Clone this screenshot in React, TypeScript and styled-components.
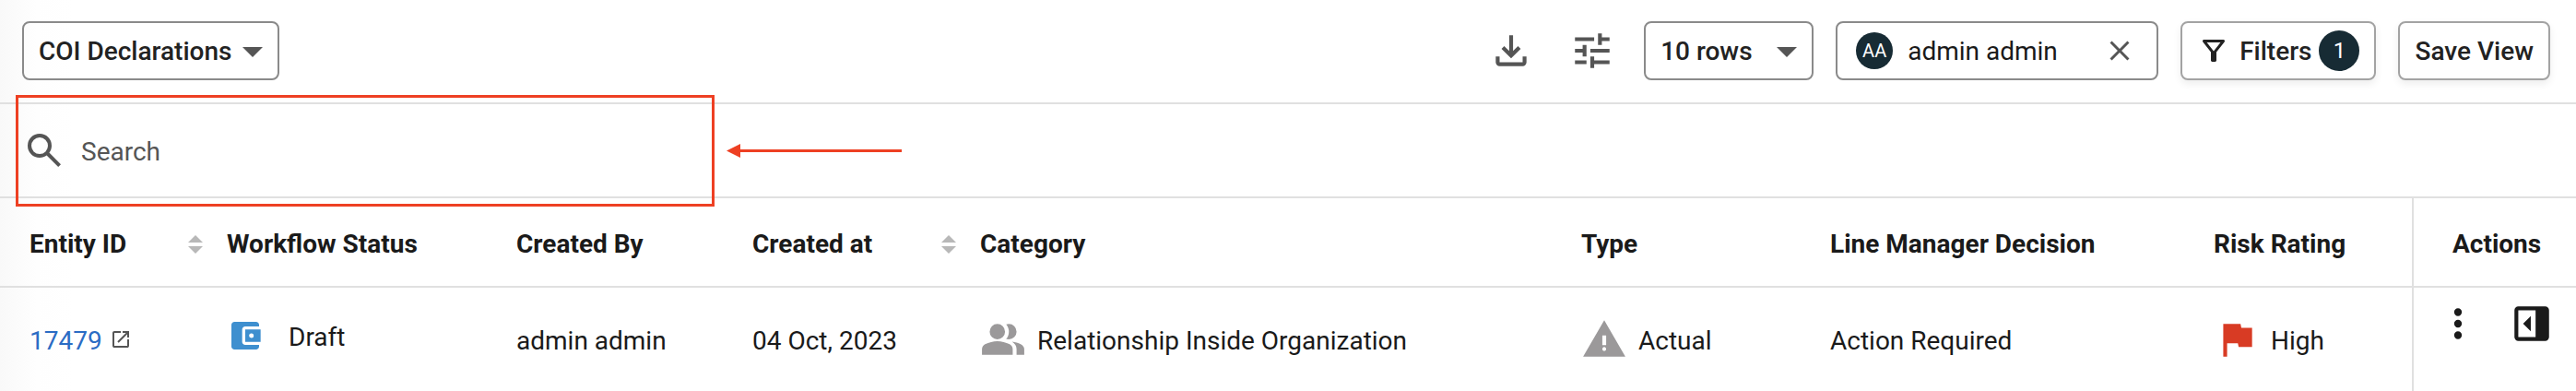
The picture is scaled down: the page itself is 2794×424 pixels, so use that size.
import React from 'react';
import styled, { createGlobalStyle } from 'styled-components';

const GlobalStyle = createGlobalStyle`
  * { box-sizing: border-box; }
  body {
    margin: 0;
    background: #fff;
    color: #1a1a1a;
    font-family: Roboto, "Liberation Sans", sans-serif;
    font-size: 28px;
    line-height: 32px;
  }
  button, input, select { font: inherit; color: inherit; }
`;

const Page = styled.main`
  background: linear-gradient(to right, #f9f9f9, #fefefe 40px, #fff 80px);
`;

const Toolbar = styled.header`
  display: flex;
  align-items: center;
  justify-content: space-between;
  height: 113px;
  padding: 0 28px 2px 24px;
  border-bottom: 2px solid #e0e0e0;
`;

const Tools = styled.div`
  display: flex;
  align-items: center;
  gap: 24px;
`;

const IconGroup = styled.div`
  display: flex;
  gap: 38px;
  margin-right: 7px;
`;

const IconButton = styled.button`
  display: flex;
  padding: 0;
  border: 0;
  background: none;
  color: #555;
  cursor: pointer;
`;

const Label = styled.span`
  display: block;
  padding-top: 3px;
`;

const SelectBox = styled.div<{ $width: number }>`
  display: grid;
  grid-template-columns: 1fr auto;
  align-items: center;
  width: ${(p) => p.$width}px;
  height: 64px;
  padding-right: 16px;
  border: 2px solid #8a8a8a;
  border-radius: 8px;
  color: #555;
`;

const Select = styled.select`
  grid-area: 1 / 1 / 2 / 3;
  width: 100%;
  height: 60px;
  padding: 3px 0 0 16px;
  border: 0;
  background: transparent;
  color: #222;
  font-weight: 500;
  appearance: none;
  outline: none;
`;

const Caret = styled.svg`
  grid-area: 1 / 2;
  width: 22px;
  height: 11px;
  margin-top: 3px;
  pointer-events: none;
`;

const UserChip = styled.div`
  display: flex;
  align-items: center;
  width: 350px;
  height: 64px;
  padding: 0 22px 0 20px;
  border: 2px solid #8a8a8a;
  border-radius: 8px;
`;

const Round = styled.span<{ $size: number; $font: number }>`
  display: flex;
  align-items: center;
  justify-content: center;
  width: ${(p) => p.$size}px;
  height: ${(p) => p.$size}px;
  border-radius: 50%;
  background: #172b34;
  color: #fff;
  font-size: ${(p) => p.$font}px;
  font-weight: 400;
`;

const UserName = styled(Label)`
  flex: 1;
  margin-left: 16px;
`;

const Button = styled.button`
  display: flex;
  align-items: center;
  height: 64px;
  padding: 0 16px;
  border: 2px solid #a3a3a3;
  border-radius: 8px;
  background: #fff;
  color: #222;
  font-weight: 500;
  white-space: nowrap;
  box-shadow: 0 4px 8px rgba(0, 0, 0, 0.07);
  cursor: pointer;
`;

const FilterLabel = styled(Label)`
  margin: 0 8px 0 10px;
`;

const SearchBar = styled.div`
  display: flex;
  align-items: center;
  height: 102px;
  padding: 0 24px;
  border-bottom: 2px solid #e0e0e0;
`;

const SearchField = styled.label`
  position: relative;
  display: flex;
  flex: 0 1 744px;
  align-items: center;
  gap: 16px;
  color: #555;
`;

const SearchInput = styled.input`
  flex: 1;
  min-width: 0;
  height: 60px;
  padding: 3px 0 0;
  border: 0;
  outline: none;
  background: none;
  &::placeholder { color: #555; opacity: 1; }
`;

const Highlight = styled.span`
  position: absolute;
  inset: -30px -7px -31px -7px;
  border: 3px solid #ee4023;
  pointer-events: none;
`;

const Arrow = styled.svg`
  width: 190px;
  height: 15px;
  margin-left: 20px;
`;

const Table = styled.table`
  width: 100%;
  table-layout: fixed;
  border-collapse: separate;
  border-spacing: 0;
`;

const Col = styled.col<{ $width?: number }>`
  width: ${(p) => (p.$width ? `${p.$width}px` : 'auto')};
`;

const HeadCell = styled.th`
  height: 97px;
  padding: 4px 10px 0 0;
  border-bottom: 2px solid #e0e0e0;
  text-align: left;
  font-weight: 700;
  white-space: nowrap;
  &:first-child { padding-left: 32px; }
  &:last-child { padding-left: 42px; border-left: 2px solid #e0e0e0; }
`;

const HeadInner = styled.div`
  display: flex;
  align-items: center;
  justify-content: space-between;
  padding-right: 16px;
`;

const SortButton = styled(IconButton)`
  color: #b8b8b8;
`;

const Cell = styled.td`
  height: 112px;
  padding: 0;
  vertical-align: middle;
  white-space: nowrap;
  &:first-child { padding-left: 32px; }
  &:last-child {
    padding: 14px 0 0 23px;
    border-left: 2px solid #e0e0e0;
    vertical-align: top;
  }
`;

const CellInner = styled.div<{ $gap: number; $raise?: boolean }>`
  display: flex;
  align-items: center;
  gap: ${(p) => p.$gap}px;
  padding-bottom: ${(p) => (p.$raise ? 8 : 0)}px;
`;

const EntityLink = styled.a`
  padding-top: 3px;
  color: #2b6cc4;
  text-decoration: none;
`;

const Actions = styled.div`
  display: flex;
  gap: 30px;
  button { color: #1a1a1a; }
`;

type IconProps = { d: string; size?: number; color?: string };

/* Paths are drawn on the 960-unit Material Symbols grid. */
const Icon = ({ d, size = 50, color = 'currentColor' }: IconProps) => (
  <svg width={size} height={size} viewBox="0 -960 960 960" fill={color} fillRule="evenodd" aria-hidden="true">
    <path d={d} />
  </svg>
);

const icons = {
  download:
    'M480-320 280-520l56-58 104 104v-326h80v326l104-104 56 58-200 200ZM240-160q-33 0-56.500-23.500T160-240v-120h80v120h480v-120h80v120q0 33-23.500 56.500T720-160H240Z',
  tune: 'M440-120v-240h80v80h320v80H520v80h-80Zm-320-80v-80h240v80H120Zm160-160v-80H120v-80h160v-80h80v240h-80Zm160-80v-80h400v80H440Zm160-160v-240h80v80h160v80H680v80h-80Zm-480-80v-80h400v80H120Z',
  search:
    'M784-120 532-372q-30 24-69 38t-83 14q-109 0-184.500-75.500T120-580q0-109 75.500-184.500T380-840q109 0 184.500 75.500T640-580q0 44-14 83t-38 69l252 252-56 56ZM380-400q75 0 127.500-52.500T560-580q0-75-52.500-127.500T380-760q-75 0-127.500 52.500T200-580q0 75 52.500 127.500T380-400Z',
  close: 'm256-200-56-56 224-224-224-224 56-56 224 224 224-224 56 56-224 224 224 224-56 56-224-224-224 224Z',
  filter:
    'M440-160q-17 0-28.500-11.500T400-200v-240L168-736q-15-20-4.500-42t36.500-22h560q26 0 36.500 22t-4.500 42L560-440v240q0 17-11.500 28.500T520-160h-80Zm40-308 198-252H282l198 252Z',
  open: 'M200-120q-33 0-56.500-23.500T120-200v-560q0-33 23.500-56.500T200-840h280v80H200v560h560v-280h80v280q0 33-23.500 56.500T760-120H200Zm188-212-56-56 372-372H560v-80h280v280h-80v-144L388-332Z',
  group:
    'M40-160v-112q0-34 17.500-62.500T104-378q62-31 126-46.500T360-440q66 0 130 15.500T616-378q29 15 46.500 43.500T680-272v112H40Zm720 0v-120q0-44-24.500-84.500T666-434q51 6 96 20.500t84 35.500q36 20 55 44.500t19 53.500v120H760ZM360-480q-66 0-113-47t-47-113q0-66 47-113t113-47q66 0 113 47t47 113q0 66-47 113t-113 47Zm400-160q0 66-47 113t-113 47q-11 0-28-2.500t-28-5.500q27-32 41.500-71t14.500-81q0-42-14.500-81T544-792q14-5 28-6.500t28-1.500q66 0 113 47t47 113Z',
  warning:
    'm40-120 440-760 440 760H40Zm440-120q17 0 28.500-11.500T520-280q0-17-11.500-28.500T480-320q-17 0-28.500 11.500T440-280q0 17 11.500 28.500T480-240Zm-40-120h80v-200h-80v200Z',
  flag: 'M200-120v-680h360l16 80h224v400H520l-16-80H280v280h-80Z',
  more: 'M480-160q-33 0-56.500-23.500T400-240q0-33 23.500-56.500T480-320q33 0 56.500 23.500T560-240q0 33-23.500 56.500T480-160Zm0-240q-33 0-56.500-23.500T400-480q0-33 23.500-56.500T480-560q33 0 56.500 23.500T560-480q0 33-23.500 56.500T480-400Zm0-240q-33 0-56.500-23.500T400-720q0-33 23.500-56.500T480-800q33 0 56.500 23.500T560-720q0 33-23.500 56.500T480-640Z',
  panel:
    'M460-320v-320L300-480l160 160ZM200-120q-33 0-56.500-23.500T120-200v-560q0-33 23.500-56.500T200-840h560q33 0 56.500 23.500T840-760v560q0 33-23.500 56.500T760-120H200Zm0-80h360v-560H200v560Z',
  wallet:
    'M200-120q-33 0-56.500-23.500T120-200v-560q0-33 23.500-56.500T200-840h560q33 0 56.500 23.500T840-760v40H480q-33 0-56.500 23.500T400-640v320q0 33 23.500 56.500T480-240h360v40q0 33-23.500 56.500T760-120H200ZM480-320v-320h400v320H480ZM640-420a60 60 0 1 0 0-120 60 60 0 0 0 0 120Z',
};

const DownCaret = () => (
  <Caret viewBox="0 0 22 11" aria-hidden="true">
    <path d="M0 0h22L11 11z" fill="currentColor" />
  </Caret>
);

const Sort = ({ label }: { label: string }) => (
  <SortButton aria-label={`Sort by ${label}`}>
    <svg width="16" height="20" viewBox="0 0 16 20" fill="currentColor" aria-hidden="true">
      <path d="M8 0l8 8H0zM0 12h16l-8 8z" />
    </svg>
  </SortButton>
);

const columns: { label: string; width?: number; sort?: boolean }[] = [
  { label: 'Entity ID', width: 246, sort: true },
  { label: 'Workflow Status', width: 314 },
  { label: 'Created By', width: 256 },
  { label: 'Created at', width: 247, sort: true },
  { label: 'Category' },
  { label: 'Type', width: 270 },
  { label: 'Line Manager Decision', width: 416 },
  { label: 'Risk Rating', width: 215 },
  { label: 'Actions', width: 178 },
];

export default function App() {
  return (
    <>
      <GlobalStyle />
      <Page>
        <Toolbar>
          <SelectBox $width={279}>
            <Select aria-label="View">
              <option>COI Declarations</option>
            </Select>
            <DownCaret />
          </SelectBox>
          <Tools>
            <IconGroup>
              <IconButton aria-label="Download"><Icon d={icons.download} /></IconButton>
              <IconButton aria-label="Adjust columns"><Icon d={icons.tune} /></IconButton>
            </IconGroup>
            <SelectBox $width={184}>
              <Select aria-label="Rows per page">
                <option>10 rows</option>
              </Select>
              <DownCaret />
            </SelectBox>
            <UserChip>
              <Round $size={40} $font={20}>AA</Round>
              <UserName>admin admin</UserName>
              <IconButton aria-label="Remove user"><Icon d={icons.close} size={36} /></IconButton>
            </UserChip>
            <Button>
              <Icon d={icons.filter} size={36} />
              <FilterLabel>Filters</FilterLabel>
              <Round $size={44} $font={24}>1</Round>
            </Button>
            <Button><Label>Save View</Label></Button>
          </Tools>
        </Toolbar>
        <SearchBar>
          <SearchField>
            <Icon d={icons.search} size={48} />
            <SearchInput type="text" placeholder="Search" aria-label="Search" />
            <Highlight />
          </SearchField>
          <Arrow viewBox="0 0 190 15" aria-hidden="true">
            <path d="M0 7.500L15 0v6h175v3H15v6z" fill="#ee4023" />
          </Arrow>
        </SearchBar>
        <Table>
          <colgroup>
            {columns.map((c) => <Col key={c.label} $width={c.width} />)}
          </colgroup>
          <thead>
            <tr>
              {columns.map((c) => (
                <HeadCell key={c.label} scope="col">
                  {c.sort ? <HeadInner>{c.label}<Sort label={c.label} /></HeadInner> : c.label}
                </HeadCell>
              ))}
            </tr>
          </thead>
          <tbody>
            <tr>
              <Cell>
                <CellInner $gap={8}>
                  <EntityLink href="#17479">17479</EntityLink>
                  <Icon d={icons.open} size={24} color="#555" />
                </CellInner>
              </Cell>
              <Cell>
                <CellInner $gap={27} $raise>
                  <Icon d={icons.wallet} size={40} color="#3e8fcf" />
                  <Label>Draft</Label>
                </CellInner>
              </Cell>
              <Cell><Label>admin admin</Label></Cell>
              <Cell><Label>04 Oct, 2023</Label></Cell>
              <Cell>
                <CellInner $gap={12}>
                  <Icon d={icons.group} color="#9b999a" />
                  <Label>Relationship Inside Organization</Label>
                </CellInner>
              </Cell>
              <Cell>
                <CellInner $gap={12}>
                  <Icon d={icons.warning} color="#9b999a" />
                  <Label>Actual</Label>
                </CellInner>
              </Cell>
              <Cell><Label>Action Required</Label></Cell>
              <Cell>
                <CellInner $gap={12}>
                  <Icon d={icons.flag} color="#d83b24" />
                  <Label>High</Label>
                </CellInner>
              </Cell>
              <Cell>
                <Actions>
                  <IconButton aria-label="More actions"><Icon d={icons.more} /></IconButton>
                  <IconButton aria-label="Open side panel"><Icon d={icons.panel} /></IconButton>
                </Actions>
              </Cell>
            </tr>
          </tbody>
        </Table>
      </Page>
    </>
  );
}
